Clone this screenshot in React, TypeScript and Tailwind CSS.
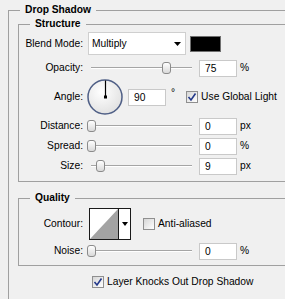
import type { ReactNode } from 'react'

function Label({ children }: { children: ReactNode }) {
  return <span className="w-[64px] shrink-0 text-right">{children}</span>
}

function Slider({ at }: { at: number }) {
  return (
    <div className="relative ml-[4px] h-[12px] w-[105px] shrink-0">
      <div className="absolute left-[4px] right-0 top-[5px] h-[2px] border-t border-[#a5a5a5] bg-white" />
      <div
        className="absolute top-0 h-[12px] w-[9px] rounded-[3px] border border-[#8b8b8b] bg-gradient-to-b from-white to-[#d9d9d9]"
        style={{ left: at }}
      />
    </div>
  )
}

function Field({ value, className = 'ml-[7px]' }: { value: string; className?: string }) {
  return (
    <div className={`${className} h-[17px] w-[38px] shrink-0 border border-[#c9c9c9] bg-white pl-[5px] leading-[15px]`}>
      {value}
    </div>
  )
}

function Check({ on }: { on?: boolean }) {
  return (
    <span className="flex h-[12px] w-[12px] shrink-0 items-center justify-center border border-[#8f8f8f] bg-gradient-to-br from-[#d6d6d6] to-white">
      {on && (
        <svg width="10" height="10" viewBox="0 0 10 10">
          <path d="M1.5 5 L4 8 L8.5 1.5" fill="none" stroke="#24398a" strokeWidth="1.6" />
        </svg>
      )}
    </span>
  )
}

function SliderRow({ label, at, value, unit, top = 'mt-[2px]' }: { label: string; at: number; value: string; unit: string; top?: string }) {
  return (
    <div className={`${top} flex h-[18px] items-center`}>
      <Label>{label}</Label>
      <Slider at={at} />
      <Field value={value} />
      <span className="ml-[3px]">{unit}</span>
    </div>
  )
}

export default function App() {
  return (
    <div className="h-[299px] w-[285px] overflow-hidden bg-[#f0f0f0] font-['Liberation_Sans',Arial,sans-serif] text-[10.25px] leading-[14px] text-black">
      <fieldset className="ml-2 mt-[3px] h-[330px] w-[320px] border border-[#a0a0a0]">
        <legend className="ml-[11px] px-[5px] font-bold">Drop Shadow</legend>

        {/* STRUCTURE */}
        <fieldset className="ml-[9px] w-[300px] border border-[#a0a0a0] pb-[6px]">
          <legend className="ml-[11px] px-[5px] font-bold">Structure</legend>

          <div className="mt-[1px] flex h-[23px] items-center">
            <Label>Blend Mode:</Label>
            <div className="ml-[5px] flex h-[23px] w-[98px] shrink-0 items-center justify-between border border-[#cfcfcf] bg-white pl-[3px] pr-[4px]">
              <span>Multiply</span>
              <svg width="7" height="4" viewBox="0 0 7 4">
                <path d="M0 0 H7 L3.5 4 Z" fill="#000" />
              </svg>
            </div>
            <div className="ml-[4px] h-[16px] w-[31px] shrink-0 border border-[#707070] bg-black" />
          </div>

          <SliderRow label="Opacity:" at={75} value="75" unit="%" top="mt-[4px]" />

          <div className="mt-[2px] flex h-[36px] items-center">
            <Label>Angle:</Label>
            <svg className="ml-[4px] shrink-0" width="36" height="36" viewBox="0 0 36 36">
              <defs>
                <radialGradient id="dial" cx="40%" cy="35%" r="70%">
                  <stop offset="0" stopColor="#ffffff" />
                  <stop offset="1" stopColor="#e0e0e0" />
                </radialGradient>
              </defs>
              <circle cx="18" cy="18" r="17" fill="url(#dial)" stroke="#4f5f86" strokeWidth="1.5" />
              <line x1="18.5" y1="18" x2="18.5" y2="1.5" stroke="#000" strokeWidth="1.2" />
              <rect x="17" y="16.5" width="3" height="3" fill="#000" />
            </svg>
            <Field value="90" className="ml-[5px]" />
            <span className="ml-[5px] self-start pt-[7px]">°</span>
            <span className="ml-[11px] flex items-center gap-[3px]">
              <Check on />
              <span>Use Global Light</span>
            </span>
          </div>

          <SliderRow label="Distance:" at={0} value="0" unit="px" />
          <SliderRow label="Spread:" at={0} value="0" unit="%" />
          <SliderRow label="Size:" at={9} value="9" unit="px" />
        </fieldset>

        {/* QUALITY */}
        <fieldset className="ml-[9px] mt-[9px] w-[300px] border border-[#a0a0a0] pb-[5px]">
          <legend className="ml-[11px] px-[5px] font-bold">Quality</legend>

          <div className="mt-[3px] flex h-[32px] items-center">
            <Label>Contour:</Label>
            <div className="ml-[6px] flex h-[32px] w-[42px] shrink-0 border border-[#1a1a1a] bg-white">
              <svg width="28" height="30" viewBox="0 0 28 30" className="shrink-0">
                <path d="M0 30 L28 0 V30 Z" fill="#a3a3a3" />
              </svg>
              <div className="flex flex-1 items-center justify-center border-l border-[#1a1a1a]">
                <svg width="6" height="4" viewBox="0 0 6 4">
                  <path d="M0 0 H6 L3 4 Z" fill="#000" />
                </svg>
              </div>
            </div>
            <span className="ml-[12px] flex items-center gap-[3px]">
              <Check />
              <span>Anti-aliased</span>
            </span>
          </div>

          <SliderRow label="Noise:" at={0} value="0" unit="%" />
        </fieldset>

        <div className="ml-[83px] mt-[9px] flex h-[14px] items-center gap-[3px]">
          <Check on />
          <span>Layer Knocks Out Drop Shadow</span>
        </div>
      </fieldset>
    </div>
  )
}
